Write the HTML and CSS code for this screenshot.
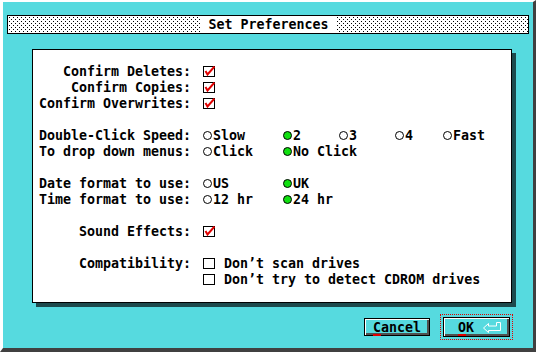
FILE: index.html
```html
<!DOCTYPE html>
<html lang="en">
<head>
    <title>Set Preferences</title>
    <meta name="viewport" content="width=device-width, initial-scale=1">
    <link rel="stylesheet" href="styles.css">
</head>
<body>
    <div class="win">
        <div class="tb"><span class="tt">Set Preferences</span></div>

        <div class="pn">
            <div class="gr">
                <div class="rw"><span class="lb">Confirm Deletes:</span>
                    <svg class="cb" width="12" height="11" viewBox="0 0 12 11"><rect x="0.5" y="0.5" width="11" height="10" fill="#fff" stroke="#000"/><path d="M2.5 5 L4.5 8.5 L11.5 0.5" stroke="#e00000" stroke-width="2" fill="none"/></svg>
                </div>
                <div class="rw"><span class="lb">Confirm Copies:</span>
                    <svg class="cb" width="12" height="11" viewBox="0 0 12 11"><rect x="0.5" y="0.5" width="11" height="10" fill="#fff" stroke="#000"/><path d="M2.5 5 L4.5 8.5 L11.5 0.5" stroke="#e00000" stroke-width="2" fill="none"/></svg>
                </div>
                <div class="rw"><span class="lb">Confirm Overwrites:</span>
                    <svg class="cb" width="12" height="11" viewBox="0 0 12 11"><rect x="0.5" y="0.5" width="11" height="10" fill="#fff" stroke="#000"/><path d="M2.5 5 L4.5 8.5 L11.5 0.5" stroke="#e00000" stroke-width="2" fill="none"/></svg>
                </div>
            </div>

            <div class="gr">
                <div class="rw"><span class="lb">Double-Click Speed:</span>
                    <span class="op w1"><i class="rd"></i>Slow</span>
                    <span class="op w2"><i class="rd on"></i>2</span>
                    <span class="op w3"><i class="rd"></i>3</span>
                    <span class="op w4"><i class="rd"></i>4</span>
                    <span class="op"><i class="rd"></i>Fast</span>
                </div>
                <div class="rw"><span class="lb">To drop down menus:</span>
                    <span class="op w1"><i class="rd"></i>Click</span>
                    <span class="op"><i class="rd on"></i>No Click</span>
                </div>
            </div>

            <div class="gr">
                <div class="rw"><span class="lb">Date format to use:</span>
                    <span class="op w1"><i class="rd"></i>US</span>
                    <span class="op"><i class="rd on"></i>UK</span>
                </div>
                <div class="rw"><span class="lb">Time format to use:</span>
                    <span class="op w1"><i class="rd"></i>12 hr</span>
                    <span class="op"><i class="rd on"></i>24 hr</span>
                </div>
            </div>

            <div class="gr">
                <div class="rw"><span class="lb">Sound Effects:</span>
                    <svg class="cb" width="12" height="11" viewBox="0 0 12 11"><rect x="0.5" y="0.5" width="11" height="10" fill="#fff" stroke="#000"/><path d="M2.5 5 L4.5 8.5 L11.5 0.5" stroke="#e00000" stroke-width="2" fill="none"/></svg>
                </div>
            </div>

            <div class="gr">
                <div class="rw"><span class="lb">Compatibility:</span>
                    <svg class="cb" width="12" height="11" viewBox="0 0 12 11"><rect x="0.5" y="0.5" width="11" height="10" fill="#fff" stroke="#000"/></svg>
                    <span class="ct">Don’t scan drives</span>
                </div>
                <div class="rw"><span class="lb"></span>
                    <svg class="cb" width="12" height="11" viewBox="0 0 12 11"><rect x="0.5" y="0.5" width="11" height="10" fill="#fff" stroke="#000"/></svg>
                    <span class="ct">Don’t try to detect CDROM drives</span>
                </div>
            </div>
        </div>

        <div class="bt">
            <button class="b bc"><u>C</u>ancel</button>
            <div class="fc">
                <button class="b bo"><u>O</u>K
                    <svg class="ret" width="19" height="11" viewBox="0 0 19 11"><path d="M0.5 6 L5.5 1.5 V4 H13.5 V0.5 H17.5 V8.5 H5.5 V10.5 Z" fill="none" stroke="#fff"/></svg>
                </button>
            </div>
        </div>
    </div>
</body>
</html>
```

FILE: styles.css
```css
/* Colores */
:root {
    --cy: #56dadf; /* Cian */
    --dt: #6ccfd3; /* Punto del tramado */
    --rd: #e00000; /* Rojo */
    --gn: #10e010; /* Verde */
}

html, body {
    margin: 0;
    padding: 0;
    background: #000;
}

/* Ventana */
.win {
    box-sizing: border-box;
    width: 536px;
    height: 352px;
    border-top: 2px solid #fff;
    border-left: 3px solid #fff;
    border-right: 3px solid #404040;
    border-bottom: 4px solid #404040;
    padding: 13px 4px 0 4px;
    display: flex;
    flex-direction: column;
    background-color: var(--cy);
    font-family: "DejaVu Sans Mono", monospace;
    font-size: 13.3px;
    font-weight: bold;
    color: #000;
}

/* Barra de titulo */
.tb {
    height: 19px;
    box-sizing: border-box;
    border: 1px solid #000;
    display: flex;
    justify-content: center;
    background-color: #fff;
    background-image:
        conic-gradient(at 1px 1px, transparent 75%, #000 0),
        conic-gradient(at 1px 1px, transparent 75%, #000 0);
    background-size: 4px 4px;
    background-position: 1px 1px, 3px 3px;
}

.tt {
    background: #fff;
    padding: 0 7px 0 8px;
    line-height: 17px;
}

/* Panel blanco */
.pn {
    width: 480px;
    height: 254px;
    box-sizing: border-box;
    margin: 15px 0 0 25px;
    border: 1px solid #000;
    background: #fff;
    padding-top: 13px;
    box-shadow: 4px 4px 0 #1d4a4c;
}

.gr {
    margin-bottom: 16px;
}

.rw {
    display: flex;
    align-items: center;
    height: 16px;
}

.lb {
    width: 158px;
    margin-right: 12px;
    text-align: right;
    white-space: pre;
}

.cb {
    display: block;
}

.ct {
    margin-left: 9px;
}

.op {
    display: flex;
    align-items: center;
}

.w1 { width: 80px; }
.w2 { width: 56px; }
.w3 { width: 56px; }
.w4 { width: 48px; }

.rd {
    width: 9px;
    height: 9px;
    box-sizing: border-box;
    border: 1px solid #000;
    border-radius: 50%;
    margin-right: 1px;
    background: #fff;
}

.rd.on {
    background: var(--gn);
}

/* Botones */
.bt {
    display: flex;
    justify-content: flex-end;
    align-items: center;
    gap: 10px;
    margin: 11px 16px 0 0;
}

.b {
    box-sizing: border-box;
    font: inherit;
    color: #000;
    background: transparent;
    border: 1px solid #000;
    box-shadow: inset 1px 1px 0 #fff, inset -2px -2px 0 #505050;
    padding: 0;
    display: flex;
    align-items: center;
    justify-content: center;
    cursor: pointer;
}

.b u {
    text-decoration-color: var(--rd);
    text-decoration-thickness: 2px;
    text-underline-offset: 2px;
}

.bc {
    width: 66px;
    height: 18px;
}

.fc {
    padding: 2px;
    border: 1px dotted var(--rd);
}

.bo {
    width: 67px;
    height: 20px;
    padding-left: 14px;
    justify-content: flex-start;
}

.ret {
    margin-left: 9px;
}
```
